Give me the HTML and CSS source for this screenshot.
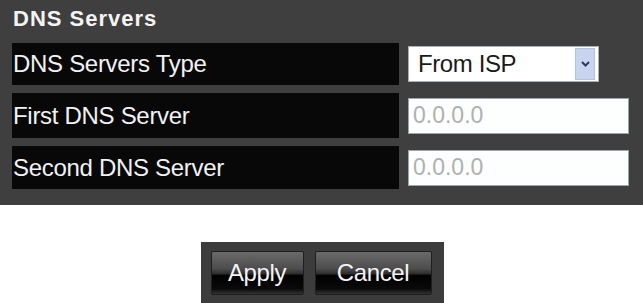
FILE: index.html
```html
<!DOCTYPE html>
<html lang="en">
<head>
  <meta charset="UTF-8">
  <meta name="viewport" content="width=device-width, initial-scale=1.0">
  <title>DNS Servers</title>
  <link rel="stylesheet" href="styles.css">
</head>
<body>
  <div class="panel">
    <h3>DNS Servers</h3>
    <div class="rows">
      <div class="label">DNS Servers Type</div>
      <div class="field">
        <div class="select">
          <span class="select-text">From ISP</span>
          <span class="select-arrow">
            <svg width="9" height="6" viewBox="0 0 9 6"><path d="M1 1 L4.5 4.5 L8 1" fill="none" stroke="#2b3b60" stroke-width="2"/></svg>
          </span>
        </div>
      </div>

      <div class="label">First DNS Server</div>
      <div class="field">
        <input type="text" placeholder="0.0.0.0" disabled>
      </div>

      <div class="label">Second DNS Server</div>
      <div class="field">
        <input type="text" placeholder="0.0.0.0" disabled>
      </div>
    </div>
  </div>

  <div class="actions">
    <div class="button-box">
      <button class="btn btn-apply">Apply</button>
      <button class="btn btn-cancel">Cancel</button>
    </div>
  </div>
</body>
</html>
```

FILE: styles.css
```css
body {
  margin: 0;
  background: #fff;
  font-family: 'Liberation Sans', Arial, sans-serif;
  overflow: hidden;
}
.panel {
  background: #3f3f3f;
  padding: 8px 14px 16px 12px;
}
h3 {
  margin: 0 0 13px 1px;
  color: #f4f4f4;
  font-size: 22px;
  line-height: 22px;
  letter-spacing: 1px;
  font-weight: bold;
}
.rows {
  display: grid;
  grid-template-columns: 387px 221px;
  grid-template-rows: 42px 45px 43px;
  column-gap: 9px;
  row-gap: 8px;
}
.label {
  background: #080808;
  color: #f2f2f2;
  font-size: 24px;
  letter-spacing: -0.3px;
  padding-left: 1px;
  display: flex;
  align-items: center;
}
.field {
  display: flex;
  align-items: center;
}
.select {
  width: 191px;
  height: 36px;
  box-sizing: border-box;
  border: 1px solid #a9b0ba;
  background: #fff;
  display: flex;
  align-items: center;
  justify-content: space-between;
  padding: 0 3px 0 9px;
}
.select-text {
  font-size: 24px;
  letter-spacing: -0.4px;
  color: #1a1a1a;
}
.select-arrow {
  width: 20px;
  height: 32px;
  box-sizing: border-box;
  background: #c8d5f0;
  border: 1px solid #b6c2dd;
  display: flex;
  align-items: center;
  justify-content: center;
}
input {
  width: 221px;
  height: 36px;
  box-sizing: border-box;
  border: 1px solid #9ea4aa;
  background: #fcfffe;
  font-family: inherit;
  font-size: 23px;
  padding: 0 4px;
  margin: 0;
}
input::placeholder {
  color: #b0b0b0;
}
.actions {
  display: flex;
  justify-content: center;
  margin-top: 37px;
  padding-left: 1px;
}
.button-box {
  background: #3c3c3c;
  padding: 9px 12px 12px 10px;
  display: flex;
  gap: 11px;
}
.btn {
  height: 44px;
  border: 1px solid #1e1e1e;
  border-radius: 2px;
  background: linear-gradient(#6a6a6a 0%, #4c4c4c 40%, #2c2c2c 52%, #000 56%, #0a0a0a 88%, #333 100%);
  color: #f4f4f4;
  font-family: inherit;
  font-size: 24px;
  letter-spacing: -0.4px;
  padding: 0;
  cursor: pointer;
}
.btn-apply {
  width: 93px;
}
.btn-cancel {
  width: 117px;
}
```
